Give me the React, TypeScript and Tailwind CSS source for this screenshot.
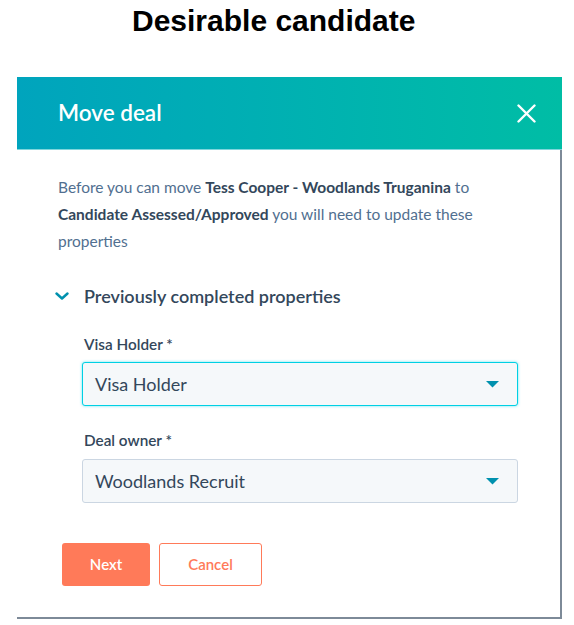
import React from 'react';

function Caret() {
  return (
    <svg width="13" height="7" viewBox="0 0 13 7" className="shrink-0">
      <path d="M0 0 L13 0 L6.5 6.5 Z" fill="#0091ae" />
    </svg>
  );
}

function SelectBox({ value, focused }: { value: string; focused?: boolean }) {
  return (
    <div
      className={
        focused
          ? 'flex h-[44px] w-[436px] items-center justify-between rounded-[3px] border-[1.5px] border-[#00d0e4] bg-[#f5f8fa] pl-[12px] pr-[18px] shadow-[0_0_3px_rgba(0,208,228,0.6)]'
          : 'flex h-[44px] w-[436px] items-center justify-between rounded-[3px] border border-[#cbd6e2] bg-[#f5f8fa] pl-[12px] pr-[18px]'
      }
    >
      <span className="text-[18px] text-[#33475b]">{value}</span>
      <Caret />
    </div>
  );
}

export default function App() {
  return (
    <div className="h-[625px] w-[574px] overflow-hidden bg-white font-['Lato','Liberation_Sans',sans-serif]">
      <h1 className="ml-[132px] mt-[4px] font-['Liberation_Sans',Arial,sans-serif] text-[30px] font-bold leading-[34px] text-black">
        Desirable candidate
      </h1>

      <div className="ml-[17px] mt-[39px] w-[545px]">
        <div className="flex h-[73px] items-center justify-between border-b border-[#7fd6dc] bg-gradient-to-r from-[#00a4bd] to-[#00bda5] pl-[41px] pr-[26px]">
          <span className="text-[22.5px] font-semibold text-white">Move deal</span>
          <svg width="19" height="19" viewBox="0 0 19 19">
            <path d="M1.5 1.5 L17.5 17.5 M17.5 1.5 L1.5 17.5" stroke="white" strokeWidth="2.4" strokeLinecap="round" />
          </svg>
        </div>

        <div className="h-[469px] border-b-2 border-r-2 border-[#7d8a98] pl-[41px] pt-[24px]">
          <p className="text-[15.5px] leading-[27px] text-[#516f90]">
            Before you can move <b className="font-bold text-[#33475b]">Tess Cooper - Woodlands Truganina</b> to
            <br />
            <b className="font-bold text-[#33475b]">Candidate Assessed/Approved</b> you will need to update these
            <br />
            properties
          </p>

          <div className="mt-[29px] flex h-[24px] items-center">
            <svg width="14" height="8" viewBox="0 0 14 8" className="ml-[-3px] mr-[15px]">
              <path d="M1.5 1.5 L7 6.5 L12.5 1.5" fill="none" stroke="#0091ae" strokeWidth="2.4" strokeLinecap="round" strokeLinejoin="round" />
            </svg>
            <span className="text-[18px] font-semibold text-[#33475b]">Previously completed properties</span>
          </div>

          <div className="ml-[24px] mt-[26px]">
            <div className="h-[20px] pl-[2px] text-[15.3px] font-semibold leading-[20px] text-[#33475b]">Visa Holder *</div>
            <div className="mt-[8px]">
              <SelectBox value="Visa Holder" focused />
            </div>

            <div className="mt-[24px] h-[20px] pl-[2px] text-[15.3px] font-semibold leading-[20px] text-[#33475b]">Deal owner *</div>
            <div className="mt-[9px]">
              <SelectBox value="Woodlands Recruit" />
            </div>
          </div>

          <div className="ml-[4px] mt-[40px] flex gap-[9px]">
            <button className="h-[43px] w-[88px] rounded-[3px] bg-[#ff7a59] text-[15px] font-semibold text-white">
              Next
            </button>
            <button className="h-[43px] w-[103px] rounded-[3px] border border-[#ff7a59] bg-white text-[15px] font-semibold text-[#ff7a59]">
              Cancel
            </button>
          </div>
        </div>
      </div>
    </div>
  );
}
